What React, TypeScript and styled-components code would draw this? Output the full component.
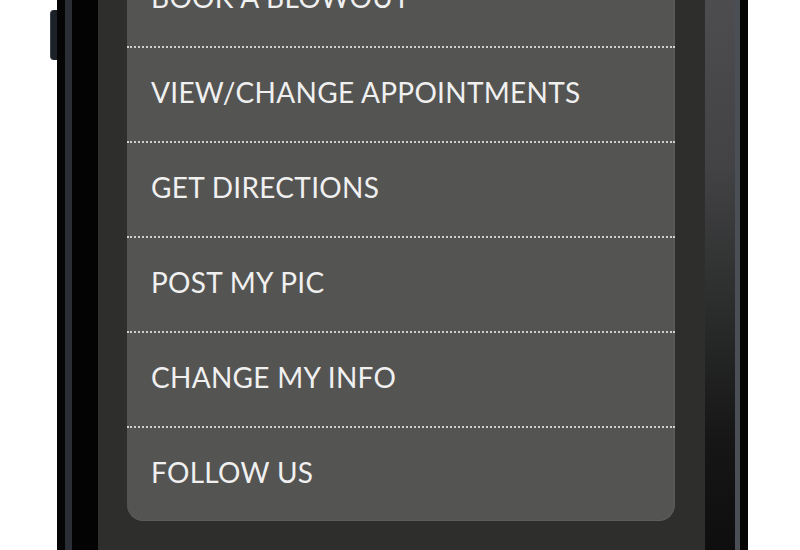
import React from 'react'
import styled, {createGlobalStyle} from "styled-components"

const items = [
    "BOOK A BLOWOUT",
    "VIEW/CHANGE APPOINTMENTS",
    "GET DIRECTIONS",
    "POST MY PIC",
    "CHANGE MY INFO",
    "FOLLOW US",
]

function App() {
    return (
        <>
            <GlobalStyle />
            <Page>
                <ButtonRail>
                    <SideButton />
                </ButtonRail>
                <Band $w={8} $bg="#050505" />
                <Band $w={7} $bg="#2b2e34" />
                <Band $w={26} $bg="#030303" />
                <Screen>
                    <Panel>
                        {items.map((label, i) => (
                            <Row key={label} $first={i === 0}>
                                <Label>{label}</Label>
                            </Row>
                        ))}
                    </Panel>
                </Screen>
                <Band $w={30} $bg="linear-gradient(180deg, #4d4d4f 0%, #434345 30%, #2c2d2d 55%, #161616 80%, #0e0e0e 100%)" />
                <Band $w={5} $bg="#4a4f56" />
                <Band $w={8} $bg="#050505" />
            </Page>
        </>
    )
}

export default App

const GlobalStyle = createGlobalStyle`
    html, body {
        margin: 0;
        padding: 0;
        background: #ffffff;
        overflow: hidden;
    }
`

const Page = styled.div`
    display: flex;
    height: 550px;
    width: 800px;
    background: #ffffff;
    overflow: hidden;
`

const ButtonRail = styled.div`
    width: 57px;
    flex-shrink: 0;
    display: flex;
    flex-direction: column;
    align-items: flex-end;
    padding-top: 10px;
    box-sizing: border-box;
`

const SideButton = styled.div`
    width: 6px;
    height: 50px;
    background: #1c2027;
    border-left: 1px solid #3b414b;
    border-radius: 4px 0 0 4px;
`

const Band = styled.div<{ $w: number, $bg: string }>`
    width: ${p => p.$w}px;
    flex-shrink: 0;
    background: ${p => p.$bg};
`

const Screen = styled.div`
    width: 607px;
    flex-shrink: 0;
    box-sizing: border-box;
    padding: 0 30px 0 29px;
    background: #2e2f2c;
`

const Panel = styled.div`
    margin-top: -47px;
    background: #545452;
    border-radius: 0 0 16px 16px;
    box-shadow: inset 0 -1px 0 rgba(255,255,255,0.06), inset -2px 0 0 rgba(255,255,255,0.03);
`

const Row = styled.div<{ $first?: boolean }>`
    height: 93px;
    box-sizing: content-box;
    display: flex;
    align-items: center;
    padding: 0 0 0 24px;
    border-top: ${p => p.$first ? "none" : "2px dotted #cfcfcf"};
`

const Label = styled.span`
    font-family: Lato, "Open Sans", sans-serif;
    font-size: 28px;
    color: #f0f0f0;
    letter-spacing: 0.3px;
    margin-bottom: 6px;
`
